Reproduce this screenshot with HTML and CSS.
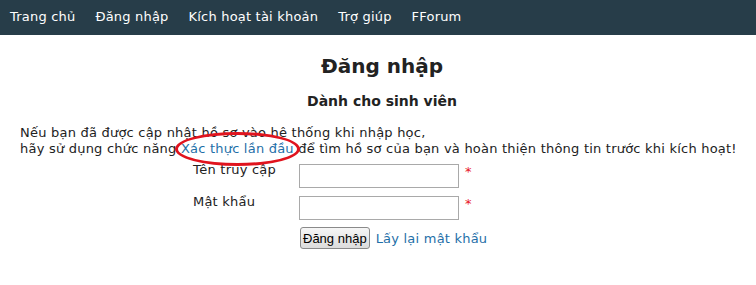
FILE: index.html
```html
<!DOCTYPE html>
<html lang="vi">
<head>
<meta charset="utf-8">
<title>Đăng nhập</title>
<link rel="stylesheet" href="styles.css">
</head>
<body>
<nav class="topnav">
  <a href="#">Trang chủ</a>
  <a href="#">Đăng nhập</a>
  <a href="#">Kích hoạt tài khoản</a>
  <a href="#">Trợ giúp</a>
  <a href="#">FForum</a>
</nav>
<main class="content">
  <h1 class="title">Đăng nhập</h1>
  <h2 class="subtitle">Dành cho sinh viên</h2>
  <p class="intro">Nếu bạn đã được cập nhật hồ sơ vào hệ thống khi nhập học,<br>hãy sử dụng chức năng <span class="hl"><a href="#">Xác thực lần đầu</a><span class="ring"></span></span> để tìm hồ sơ của bạn và hoàn thiện thông tin trước khi kích hoạt!</p>
  <form class="login">
    <label class="lbl">Tên truy cập</label>
    <input class="field" type="text">
    <span class="req">*</span>
    <label class="lbl">Mật khẩu</label>
    <input class="field" type="password">
    <span class="req">*</span>
    <span></span>
    <div class="actions">
      <button class="btn" type="button">Đăng nhập</button>
      <a class="forgot" href="#">Lấy lại mật khẩu</a>
    </div>
  </form>
</main>
</body>
</html>
```

FILE: styles.css
```css
html, body {
  margin: 0;
  padding: 0;
  background: #fff;
}
body {
  font-family: "DejaVu Sans", Verdana, sans-serif;
  font-size: 13px;
  color: #222;
}
.topnav {
  background: #273d49;
  height: 35px;
  display: flex;
  align-items: center;
  padding-left: 10px;
  gap: 20px;
}
.topnav a {
  color: #fff;
  text-decoration: none;
  font-size: 13px;
  letter-spacing: 0.2px;
  padding-bottom: 2px;
}
.content {
  padding: 0 12px 0 20px;
}
.title {
  margin: 17px 0 0;
  text-align: center;
  font-size: 20px;
  font-weight: bold;
  color: #222;
  line-height: 28px;
}
.subtitle {
  margin: 11px 0 0;
  text-align: center;
  font-size: 14px;
  font-weight: bold;
  color: #222;
  line-height: 20px;
}
.intro {
  margin: 14px 0 0;
  line-height: 16px;
  letter-spacing: 0.22px;
  color: #222;
}
.intro a, .forgot {
  color: #1f6fa8;
  text-decoration: none;
}
.hl {
  position: relative;
}
.ring {
  position: absolute;
  left: -6px;
  right: -6px;
  top: -9px;
  bottom: -10px;
  border: 3px solid #e0141e;
  border-radius: 50%;
  pointer-events: none;
}
.login {
  display: grid;
  grid-template-columns: 106px 160px auto;
  column-gap: 0;
  row-gap: 8px;
  margin: 7px 0 0 173px;
  align-items: start;
}
.lbl {
  line-height: 16px;
  margin-top: -2px;
  letter-spacing: 0.22px;
}
.field {
  width: 160px;
  height: 24px;
  box-sizing: border-box;
  border: 1px solid #a9a9a9;
  margin: 0;
  padding: 2px;
  font: inherit;
}
.req {
  color: #e8141e;
  font-size: 13px;
  line-height: 16px;
  margin-left: 6px;
}
.actions {
  grid-column: 2 / 4;
  display: flex;
  align-items: center;
  gap: 6px;
  margin-top: -1px;
  padding-left: 1px;
}
.btn {
  font-family: "Liberation Sans", Arial, sans-serif;
  font-size: 13px;
  color: #000;
  height: 22px;
  padding: 0 2px;
  border: 1px solid #8a8a8a;
  border-radius: 3px;
  background: linear-gradient(#f6f6f6, #dcdcdc);
}
.forgot {
  font-size: 13px;
  letter-spacing: 0.22px;
}
```
